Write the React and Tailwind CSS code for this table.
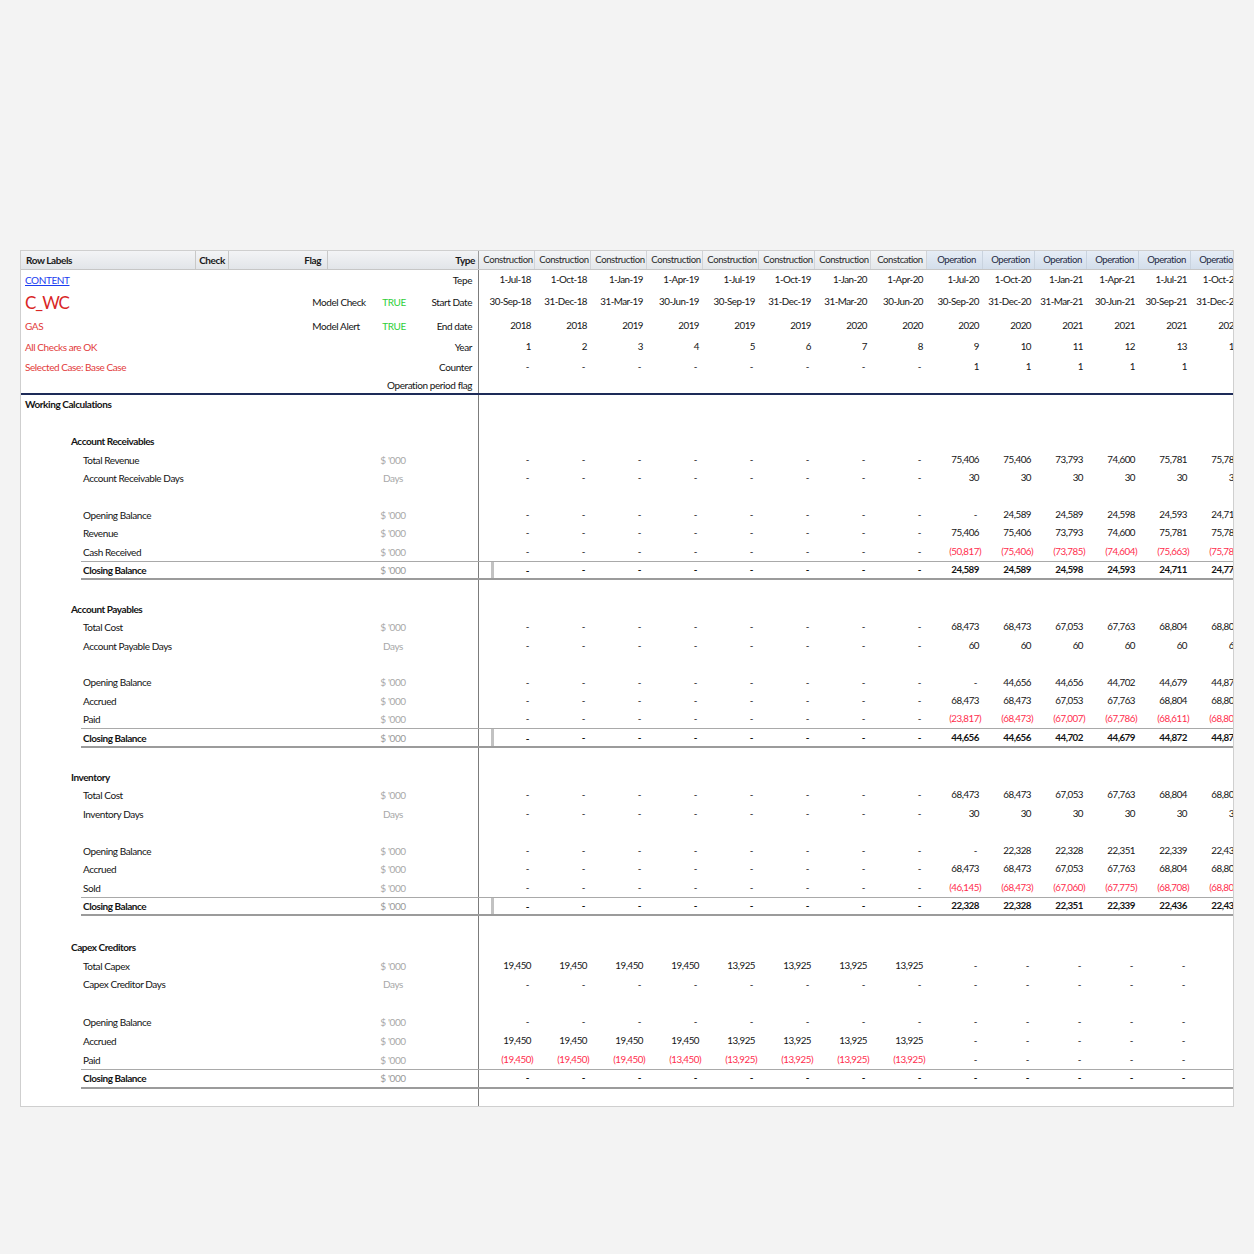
import React from "react";

const colW = [
  "w-[56px]", "w-[56px]", "w-[56px]", "w-[56px]", "w-[56px]", "w-[56px]", "w-[56px]", "w-[56px]", "w-[56px]",
  "w-[52px]", "w-[52px]", "w-[52px]", "w-[52px]", "w-[52px]",
];

const heads = [
  "Construction", "Construction", "Construction", "Construction", "Construction", "Construction", "Construction",
  "Constcation", "Operation", "Operation", "Operation", "Operation", "Operation", "Operation",
];

const d8 = ["-", "-", "-", "-", "-", "-", "-", "-"];
const d6 = ["-", "-", "-", "-", "-", "-"];

const topRows = [
  { label: "Tepe", vals: ["1-Jul-18", "1-Oct-18", "1-Jan-19", "1-Apr-19", "1-Jul-19", "1-Oct-19", "1-Jan-20", "1-Apr-20", "1-Jul-20", "1-Oct-20", "1-Jan-21", "1-Apr-21", "1-Jul-21", "1-Oct-21"] },
  { label: "Start Date", vals: ["30-Sep-18", "31-Dec-18", "31-Mar-19", "30-Jun-19", "30-Sep-19", "31-Dec-19", "31-Mar-20", "30-Jun-20", "30-Sep-20", "31-Dec-20", "31-Mar-21", "30-Jun-21", "30-Sep-21", "31-Dec-21"] },
  { label: "End date", vals: ["2018", "2018", "2019", "2019", "2019", "2019", "2020", "2020", "2020", "2020", "2021", "2021", "2021", "2021"] },
  { label: "Year", vals: ["1", "2", "3", "4", "5", "6", "7", "8", "9", "10", "11", "12", "13", "14"] },
  { label: "Counter", vals: [...d8, "1", "1", "1", "1", "1", "1"] },
  { label: "Operation period flag", vals: [] },
];

const sections = [
  {
    title: "Account Receivables",
    rowH: "h-[18.4px]",
    gapH: "h-[19.5px]",
    rows: [
      { label: "Total Revenue", unit: "$ '000", vals: [...d8, "75,406", "75,406", "73,793", "74,600", "75,781", "75,781"] },
      { label: "Account Receivable Days", unit: "Days", vals: [...d8, "30", "30", "30", "30", "30", "30"] },
      null,
      { label: "Opening Balance", unit: "$ '000", vals: [...d8, "-", "24,589", "24,589", "24,598", "24,593", "24,711"] },
      { label: "Revenue", unit: "$ '000", vals: [...d8, "75,406", "75,406", "73,793", "74,600", "75,781", "75,781"] },
      { label: "Cash Received", unit: "$ '000", vals: [...d8, "(50,817)", "(75,406)", "(73,785)", "(74,604)", "(75,663)", "(75,781)"] },
    ],
    closing: [...d8, "24,589", "24,589", "24,598", "24,593", "24,711", "24,772"],
    pipe: true,
  },
  {
    title: "Account Payables",
    rowH: "h-[18.4px]",
    gapH: "h-[19.5px]",
    rows: [
      { label: "Total Cost", unit: "$ '000", vals: [...d8, "68,473", "68,473", "67,053", "67,763", "68,804", "68,804"] },
      { label: "Account Payable Days", unit: "Days", vals: [...d8, "60", "60", "60", "60", "60", "60"] },
      null,
      { label: "Opening Balance", unit: "$ '000", vals: [...d8, "-", "44,656", "44,656", "44,702", "44,679", "44,872"] },
      { label: "Accrued", unit: "$ '000", vals: [...d8, "68,473", "68,473", "67,053", "67,763", "68,804", "68,804"] },
      { label: "Paid", unit: "$ '000", vals: [...d8, "(23,817)", "(68,473)", "(67,007)", "(67,786)", "(68,611)", "(68,804)"] },
    ],
    closing: [...d8, "44,656", "44,656", "44,702", "44,679", "44,872", "44,872"],
    pipe: true,
  },
  {
    title: "Inventory",
    rowH: "h-[18.5px]",
    gapH: "h-[21px]",
    rows: [
      { label: "Total Cost", unit: "$ '000", vals: [...d8, "68,473", "68,473", "67,053", "67,763", "68,804", "68,804"] },
      { label: "Inventory Days", unit: "Days", vals: [...d8, "30", "30", "30", "30", "30", "30"] },
      null,
      { label: "Opening Balance", unit: "$ '000", vals: [...d8, "-", "22,328", "22,328", "22,351", "22,339", "22,436"] },
      { label: "Accrued", unit: "$ '000", vals: [...d8, "68,473", "68,473", "67,053", "67,763", "68,804", "68,804"] },
      { label: "Sold", unit: "$ '000", vals: [...d8, "(46,145)", "(68,473)", "(67,060)", "(67,775)", "(68,708)", "(68,804)"] },
    ],
    closing: [...d8, "22,328", "22,328", "22,351", "22,339", "22,436", "22,436"],
    pipe: true,
  },
  {
    title: "Capex Creditors",
    rowH: "h-[18.8px]",
    gapH: "h-[19px]",
    rows: [
      { label: "Total Capex", unit: "$ '000", vals: ["19,450", "19,450", "19,450", "19,450", "13,925", "13,925", "13,925", "13,925", ...d6] },
      { label: "Capex Creditor Days", unit: "Days", vals: [...d8, ...d6] },
      null,
      { label: "Opening Balance", unit: "$ '000", vals: [...d8, ...d6] },
      { label: "Accrued", unit: "$ '000", vals: ["19,450", "19,450", "19,450", "19,450", "13,925", "13,925", "13,925", "13,925", ...d6] },
      { label: "Paid", unit: "$ '000", vals: ["(19,450)", "(19,450)", "(19,450)", "(13,450)", "(13,925)", "(13,925)", "(13,925)", "(13,925)", ...d6] },
    ],
    closing: [...d8, ...d6],
    pipe: false,
  },
];

function Cell({ v, i, bold }) {
  const neg = v.startsWith("(");
  const pad = v === "-" ? "pr-[6px]" : neg ? "pr-[2px] text-[#ff2d4d]" : "pr-[4px]";
  return (
    <div className={`${colW[i]} shrink-0 flex items-center justify-end whitespace-nowrap text-[9.8px] tracking-[-0.5px] ${pad} ${bold ? "font-bold" : ""}`}>
      {v}
    </div>
  );
}

function DataCells({ vals, bold, pipe }) {
  return (
    <div className="w-[754px] shrink-0 overflow-hidden flex">
      {vals.map((v, i) =>
        pipe && i === 0 ? (
          <div key={i} className={`${colW[i]} shrink-0 flex items-stretch`}>
            <div className="ml-[12px] w-[3px] bg-[#c2c2c2]" />
            <div className={`flex-1 flex items-center justify-end pr-[6px] ${bold ? "font-bold" : ""}`}>{v}</div>
          </div>
        ) : (
          <Cell key={i} v={v} i={i} bold={bold} />
        )
      )}
    </div>
  );
}

function Row({ label, unit, vals, indent, h }) {
  return (
    <div className={`flex ${h}`}>
      <div className="w-[458px] shrink-0 border-r border-[#7c7c7c] flex items-center">
        <div className={`w-[342px] ${indent === "section" ? "pl-[50px] font-bold tracking-[-0.45px]" : "pl-[62px]"} whitespace-nowrap`}>
          {label}
        </div>
        <div className="w-[60px] text-center text-[#a8a8a8]">{unit}</div>
      </div>
      {vals ? <DataCells vals={vals} /> : null}
    </div>
  );
}

function ClosingRow({ vals, pipe }) {
  return (
    <div className="flex h-[19.5px]">
      <div className="w-[60px] shrink-0" />
      <div className="flex flex-1 border-t border-t-[#a9a9a9] border-b-2 border-b-[#9b9b9b]">
        <div className="w-[398px] shrink-0 border-r border-[#7c7c7c] flex items-center">
          <div className="w-[282px] pl-[2px] font-bold tracking-[-0.45px]">Closing Balance</div>
          <div className="w-[60px] text-center text-[#9a9a9a]">$ '000</div>
        </div>
        <DataCells vals={vals} bold pipe={pipe} />
      </div>
    </div>
  );
}

function Blank({ h }) {
  return (
    <div className={`flex ${h}`}>
      <div className="w-[458px] shrink-0 border-r border-[#7c7c7c]" />
    </div>
  );
}

export default function App() {
  return (
    <div className="w-[1254px] min-h-[1254px] bg-[#f3f3f3] pt-[250px] pl-[20px] font-['Lato',sans-serif] text-[10px] tracking-[-0.42px] text-[#141414] leading-none">
      <div className="w-[1214px] h-[857px] bg-white border border-[#cfcfcf] flex flex-col overflow-hidden">
        {/* header */}
        <div className="flex h-[19px] shrink-0 border-b border-[#c6c6c6] text-[10px]">
          <div className="w-[458px] shrink-0 flex bg-gradient-to-b from-[#f3f4f6] to-[#e2e5e9] font-bold text-[#1a1a1a]">
            <div className="w-[175px] flex items-center pl-[5px] border-r border-[#c8c8c8]">Row Labels</div>
            <div className="w-[33px] flex items-center justify-center border-r border-[#c8c8c8]">Check</div>
            <div className="w-[99px] flex items-center justify-end pr-[6px] border-r border-[#c8c8c8]">Flag</div>
            <div className="w-[151px] flex items-center justify-end pr-[3px] border-r border-[#9a9a9a]">Type</div>
          </div>
          <div className="w-[754px] shrink-0 overflow-hidden flex">
            {heads.map((h, i) => (
              <div
                key={i}
                className={`${colW[i]} shrink-0 flex items-center justify-center whitespace-nowrap border-r text-[9.6px] tracking-[-0.45px] ${
                  i < 8
                    ? "bg-gradient-to-b from-[#f4f5f7] to-[#e4e7ea] border-[#d2d4d8] pl-[3px] text-[#2a2a2a]"
                    : "bg-gradient-to-b from-[#e6edf6] to-[#d3deeb] border-[#c9d3df] pl-[4px] text-[#1f2a44]"
                }`}
              >
                {h}
              </div>
            ))}
          </div>
        </div>

        {/* top info rows */}
        <div className="flex h-[19px] shrink-0">
          <div className="w-[458px] shrink-0 border-r border-[#7c7c7c] flex items-center justify-between pl-[4px] pr-[6px]">
            <span className="text-[#1b3cf0] underline">CONTENT</span>
            <span>{topRows[0].label}</span>
          </div>
          <DataCells vals={topRows[0].vals} />
        </div>
        <div className="flex h-[26px] shrink-0">
          <div className="w-[458px] shrink-0 border-r border-[#7c7c7c] flex items-center">
            <div className="w-[292px] pl-[4px] text-[17px] tracking-[-1px] text-[#d92626]">C_WC</div>
            <div className="w-[70px]">Model Check</div>
            <div className="w-[96px] flex justify-between pr-[6px]">
              <span className="text-[#2fcf3a]">TRUE</span>
              <span>{topRows[1].label}</span>
            </div>
          </div>
          <DataCells vals={topRows[1].vals} />
        </div>
        <div className="flex h-[21px] shrink-0">
          <div className="w-[458px] shrink-0 border-r border-[#7c7c7c] flex items-center">
            <div className="w-[292px] pl-[4px] text-[#e23a3a]">GAS</div>
            <div className="w-[70px]">Model Alert</div>
            <div className="w-[96px] flex justify-between pr-[6px]">
              <span className="text-[#2fcf3a]">TRUE</span>
              <span>{topRows[2].label}</span>
            </div>
          </div>
          <DataCells vals={topRows[2].vals} />
        </div>
        <div className="flex h-[21px] shrink-0">
          <div className="w-[458px] shrink-0 border-r border-[#7c7c7c] flex items-center justify-between pl-[4px] pr-[6px]">
            <span className="text-[#e23a3a]">All Checks are OK</span>
            <span>{topRows[3].label}</span>
          </div>
          <DataCells vals={topRows[3].vals} />
        </div>
        <div className="flex h-[19px] shrink-0">
          <div className="w-[458px] shrink-0 border-r border-[#7c7c7c] flex items-center justify-between pl-[4px] pr-[6px]">
            <span className="text-[#e23a3a]">Selected Case: Base Case</span>
            <span>{topRows[4].label}</span>
          </div>
          <DataCells vals={topRows[4].vals} />
        </div>
        <div className="flex h-[17px] shrink-0">
          <div className="w-[458px] shrink-0 border-r border-[#7c7c7c] flex items-center justify-end pr-[6px]">
            <span>{topRows[5].label}</span>
          </div>
        </div>
        <div className="h-[2px] shrink-0 bg-[#1d2b58]" />

        <div className="flex h-[18px] shrink-0">
          <div className="w-[458px] shrink-0 border-r border-[#7c7c7c] flex items-center pl-[4px] font-bold">
            Working Calculations
          </div>
        </div>
        <Blank h="h-[19px] shrink-0" />

        {sections.map((s, si) => (
          <div key={si} className="flex flex-col shrink-0">
            <Row label={s.title} indent="section" h={s.rowH} />
            {s.rows.map((r, ri) =>
              r ? <Row key={ri} label={r.label} unit={r.unit} vals={r.vals} h={s.rowH} /> : <Blank key={ri} h={s.rowH} />
            )}
            <ClosingRow vals={s.closing} pipe={s.pipe} />
            {si < sections.length - 1 ? <Blank h={s.gapH} /> : null}
          </div>
        ))}

        <div className="flex flex-1">
          <div className="w-[458px] shrink-0 border-r border-[#7c7c7c]" />
        </div>
      </div>
    </div>
  );
}
